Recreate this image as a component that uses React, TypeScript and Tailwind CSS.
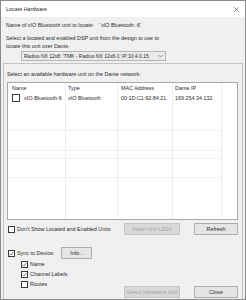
import React from "react";

// Small Windows-style checkbox
function Check({ checked = false, size = 7 }: { checked?: boolean; size?: number }) {
  return (
    <span
      className="inline-flex items-center justify-center shrink-0 border border-[#3a3a3a] bg-white"
      style={{ width: size, height: size }}
    >
      {checked && (
        <svg width={size - 2} height={size - 2} viewBox="0 0 6 6">
          <polyline points="0.6,3.2 2.3,4.9 5.4,1" fill="none" stroke="#333" strokeWidth="0.8" />
        </svg>
      )}
    </span>
  );
}

function Button({ label, disabled = false, className = "" }: { label: string; disabled?: boolean; className?: string }) {
  return (
    <div
      className={
        "flex items-center justify-center h-[12px] border " +
        (disabled
          ? "bg-[#d9d9d9] border-[#c6c6c6] text-[#a3a3a3] "
          : "bg-[#e5e5e5] border-[#adadad] text-[#2a2a2a] ") +
        className
      }
    >
      {label}
    </div>
  );
}

const columns = [
  { name: "Name", width: "w-[58px]", pad: "pl-[4px]", value: "xIO-Bluetooth-6" },
  { name: "Type", width: "w-[52px]", pad: "pl-[2px]", value: "xIO Bluetooth" },
  { name: "MAC Address", width: "w-[55px]", pad: "pl-[3px]", value: "00:1D:C1:92:84:21" },
  { name: "Dante IP", width: "w-[49px]", pad: "pl-[2px]", value: "169.254.34.132" },
];

// faint empty grid rows below the single entry
const fillerRows = ["h-[28px]", "h-[20px]", "h-[8px]", "h-[19px]"];

export default function App() {
  return (
    <div className="w-[246px] h-[300px] flex flex-col border border-[#8c8c8c] bg-[#f0f0f0] text-[5.4px] leading-[8px] text-[#2a2a2a] font-['Liberation_Sans',Arial,sans-serif] overflow-hidden">
      {/* title bar */}
      <div className="h-[16px] shrink-0 bg-white flex items-center justify-between pl-[5px] pr-[6px]">
        <span>Locate Hardware</span>
        <svg width="5" height="5" viewBox="0 0 5 5">
          <path d="M0.3 0.3 L4.7 4.7 M4.7 0.3 L0.3 4.7" stroke="#444" strokeWidth="0.6" />
        </svg>
      </div>

      {/* top text + dropdown */}
      <div className="px-[5px] shrink-0">
        <div className="mt-[4px] flex whitespace-nowrap">
          <span>Name of xIO Bluetooth unit to locate:</span>
          <span className="ml-[6px]">'xIO Bluetooth -6'</span>
        </div>
        <div className="mt-[5px] whitespace-nowrap">Select a located and enabled DSP unit from the design to use to</div>
        <div className="whitespace-nowrap">locate this unit over Dante.</div>
        <div className="mt-[1px] ml-[15px] w-[145px] h-[10px] flex items-center justify-between border border-[#b5b5b5] bg-[#ebebeb] pl-[2px] pr-[2px]">
          <span className="whitespace-nowrap overflow-hidden text-[5px]">Radius NX 12x8: 'TMK - Radius NX 12x8-1' IP:10.4.0.15</span>
          <svg width="5" height="4" viewBox="0 0 5 4" className="shrink-0 ml-[2px]">
            <polyline points="0.5,1 2.5,3 4.5,1" fill="none" stroke="#555" strokeWidth="0.6" />
          </svg>
        </div>
      </div>

      {/* main panel */}
      <div className="mt-[2px] mx-[2px] flex-1 flex flex-col border border-[#c4c4c4] border-b-0 pl-[3px] pr-[4px]">
        <div className="mt-[6px] whitespace-nowrap">Select an available hardware unit on the Dante network:</div>

        {/* list */}
        <div className="mt-[4px] h-[138px] shrink-0 flex border border-[#a9a9a9] bg-white">
          {columns.map((c, i) => (
            <div key={c.name} className={c.width + " flex flex-col border-r border-[#ececec]"}>
              <div className={"h-[10px] flex items-center whitespace-nowrap " + c.pad}>{c.name}</div>
              <div className={"h-[10px] flex items-center whitespace-nowrap " + c.pad}>
                {i === 0 && (
                  <span className="mr-[4px] flex">
                    <Check size={8} />
                  </span>
                )}
                {c.value}
              </div>
              {fillerRows.map((h, j) => (
                <div key={j} className={h + " border-b border-[#f1f1f1]"} />
              ))}
            </div>
          ))}
          <div className="flex-1" />
        </div>

        {/* filter row */}
        <div className="mt-[3px] h-[12px] shrink-0 flex items-center">
          <div className="flex-1 flex items-center ml-[1px] whitespace-nowrap">
            <Check />
            <span className="ml-[2px]">Don't Show Located and Enabled Units</span>
          </div>
          <Button label="Flash Unit LEDs" disabled className="w-[56px]" />
          <Button label="Refresh" className="w-[44px] ml-[14px]" />
        </div>

        {/* sync block */}
        <div className="mt-[12px] flex-1 flex justify-between">
          <div className="self-start flex flex-col">
            <div className="h-[12px] flex items-center whitespace-nowrap">
              <span className="ml-[1px] flex"><Check checked /></span>
              <span className="ml-[2px]">Sync to Device:</span>
              <Button label="Info..." className="w-[31px] ml-[7px]" />
            </div>
            <div className="h-[10px] flex items-center pl-[14px]">
              <Check checked />
              <span className="ml-[2px]">Name</span>
            </div>
            <div className="h-[10px] flex items-center pl-[14px]">
              <Check checked />
              <span className="ml-[2px]">Channel Labels</span>
            </div>
            <div className="h-[10px] flex items-center pl-[14px]">
              <Check />
              <span className="ml-[2px]">Routes</span>
            </div>
          </div>
          <div className="self-end flex mb-[1px]">
            <Button label="Select Hardware Unit" disabled className="w-[56px]" />
            <Button label="Close" className="w-[44px] ml-[14px]" />
          </div>
        </div>
      </div>
    </div>
  );
}
